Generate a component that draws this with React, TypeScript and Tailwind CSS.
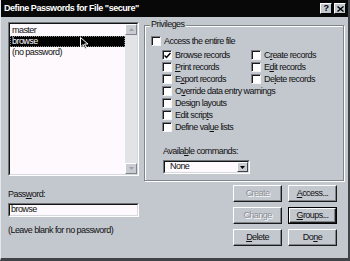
import React from "react";

const FONT = "font-['Liberation_Sans',Arial,sans-serif]";

function Check({ checked = false }: { checked?: boolean }) {
  return (
    <span className="w-[10px] h-[10px] shrink-0 bg-white border border-t-[#7c7f86] border-l-[#7c7f86] border-r-[#f4f4f6] border-b-[#f4f4f6] shadow-[inset_1px_1px_0_#1a1a1a] flex items-center justify-center">
      {checked && (
        <svg width="7" height="7" viewBox="0 0 7 7">
          <path d="M0.5 3.5 L2.5 5.5 L6.5 1" stroke="#000" strokeWidth="1.5" fill="none" />
        </svg>
      )}
    </span>
  );
}

function Option({ label, checked = false }: { label: React.ReactNode; checked?: boolean }) {
  return (
    <div className="flex items-center gap-[3px] h-[12px]">
      <Check checked={checked} />
      <span className="leading-none">{label}</span>
    </div>
  );
}

function Btn({
  children,
  disabled = false,
  focused = false,
}: {
  children: React.ReactNode;
  disabled?: boolean;
  focused?: boolean;
}) {
  return (
    <div
      className={`w-[49px] h-[17px] flex items-center justify-center ${
        focused ? "border border-black" : ""
      } bg-[#c3c7ce]`}
    >
      <div className="w-full h-full border border-t-white border-l-white border-r-[#1c1c1c] border-b-[#1c1c1c] flex items-center justify-center shadow-[inset_-1px_-1px_0_#80848b]">
        <span
          className={
            disabled
              ? "text-[#8a8e95] [text-shadow:1px_1px_0_#ffffff]"
              : "text-[#111]"
          }
        >
          {children}
        </span>
      </div>
    </div>
  );
}

export default function App() {
  return (
    <div
      className={`${FONT} w-[350px] h-[261px] bg-[#c3c7ce] text-[9px] tracking-[-0.55px] text-[#111] flex flex-col border-l border-l-[#e6e8ec] border-r-2 border-r-[#404348] border-b-[3px] border-b-[#404348] overflow-hidden`}
    >
      {/* title bar */}
      <div className="h-[17px] bg-[#080808] flex items-center justify-between pl-[3px] pr-[2px] shrink-0">
        <span className="text-white font-bold text-[9px] tracking-[-0.45px]">
          Define Passwords for File "secure"
        </span>
        <div className="flex gap-[2px]">
          <div className="w-[12px] h-[11px] bg-[#c3c7ce] border border-t-white border-l-white border-r-black border-b-black flex items-center justify-center font-bold text-[9px] leading-none text-black">
            ?
          </div>
          <div className="w-[12px] h-[11px] bg-[#c3c7ce] border border-t-white border-l-white border-r-black border-b-black flex items-center justify-center">
            <svg width="7" height="6" viewBox="0 0 7 6">
              <path d="M0.5 0.5 L6.5 5.5 M6.5 0.5 L0.5 5.5" stroke="#000" strokeWidth="1.4" />
            </svg>
          </div>
        </div>
      </div>

      <div className="flex flex-1 pl-[7px] pt-[5px] pr-[4px]">
        {/* left column */}
        <div className="w-[131px] flex flex-col">
          <div className="h-[154px] border border-t-[#6f737a] border-l-[#6f737a] border-r-white border-b-white">
            <div className="h-full border border-t-[#141414] border-l-[#141414] border-r-[#d6d9de] border-b-[#d6d9de] bg-[#fdf9fd] flex">
              <div className="flex-1 pt-[1px] leading-[11px]">
                <div className="pl-[2px] h-[11px]">master</div>
                <div className="relative h-[11px] bg-black text-white pl-[2px] outline-1 outline-dotted outline-[#888] -outline-offset-1">
                  browse
                  <svg className="absolute left-[70px] top-[1px]" width="10" height="14" viewBox="0 0 10 14">
                    <path d="M0.5 0.5 L0.5 10 L3 7.5 L5 12 L6.5 11.3 L4.6 7 L8 7 Z" fill="#000" stroke="#fff" strokeWidth="1" />
                  </svg>
                </div>
                <div className="pl-[2px] h-[11px]">(no password)</div>
              </div>
              <div className="w-[12px] bg-[#e2e3e6] flex flex-col justify-between">
                <div className="h-[11px] bg-[#c9ccd2] border border-t-white border-l-white border-r-[#808389] border-b-[#808389] flex items-center justify-center">
                  <svg width="5" height="3" viewBox="0 0 5 3">
                    <path d="M0 3 L2.5 0 L5 3 Z" fill="#9da1a8" />
                  </svg>
                </div>
                <div className="h-[11px] bg-[#c9ccd2] border border-t-white border-l-white border-r-[#808389] border-b-[#808389] flex items-center justify-center">
                  <svg width="5" height="3" viewBox="0 0 5 3">
                    <path d="M0 0 L2.5 3 L5 0 Z" fill="#9da1a8" />
                  </svg>
                </div>
              </div>
            </div>
          </div>

          <div className="mt-[14px] leading-none">
            Pass<span className="underline">w</span>ord:
          </div>
          <div className="mt-[4px] h-[14px] border border-t-[#6f737a] border-l-[#6f737a] border-r-white border-b-white">
            <div className="h-full border border-t-[#141414] border-l-[#141414] border-r-[#d6d9de] border-b-[#d6d9de] bg-[#fdf9fd] pl-[1px] flex items-center">
              browse
            </div>
          </div>
          <div className="mt-[9px] leading-none">(Leave blank for no password)</div>
        </div>

        {/* right column */}
        <div className="flex-1 ml-[5px] flex flex-col">
          <div className="relative mt-[3px] h-[156px] border border-[#80848b] shadow-[inset_1px_1px_0_#ffffff,1px_1px_0_#ffffff] pl-[6px] pt-[9px]">
            <span className="absolute left-[5px] -top-[6px] px-[1px] bg-[#c3c7ce] leading-none">
              Privileges
            </span>
            <Option label="Access the entire file" />
            <div className="mt-[2px] pl-[11px] flex">
              <div className="w-[89px] flex flex-col">
                <Option label="Browse records" checked />
                <Option label={<><span className="underline">P</span>rint records</>} />
                <Option label={<>E<span className="underline">x</span>port records</>} />
              </div>
              <div className="flex flex-col">
                <Option label={<>C<span className="underline">r</span>eate records</>} />
                <Option label={<>E<span className="underline">d</span>it records</>} />
                <Option label={<>De<span className="underline">l</span>ete records</>} />
              </div>
            </div>
            <div className="pl-[11px] flex flex-col">
              <Option label={<>O<span className="underline">v</span>erride data entry warnings</>} />
              <Option label={<>Desi<span className="underline">g</span>n layouts</>} />
              <Option label={<>Edit scrip<span className="underline">t</span>s</>} />
              <Option label={<>Define val<span className="underline">u</span>e lists</>} />
            </div>
            <div className="pl-[12px] mt-[14px] leading-none">
              Availa<span className="underline">b</span>le commands:
            </div>
            <div className="ml-[12px] mt-[4px] w-[87px] h-[14px] border border-t-[#6f737a] border-l-[#6f737a] border-r-white border-b-white">
              <div className="h-full border border-t-[#141414] border-l-[#141414] border-r-[#d6d9de] border-b-[#d6d9de] bg-[#fdf9fd] flex items-center">
                <span className="flex-1 pl-[5px]">None</span>
                <div className="w-[11px] h-full bg-[#c9ccd2] border border-t-white border-l-white border-r-[#404348] border-b-[#404348] flex items-center justify-center">
                  <svg width="5" height="3" viewBox="0 0 5 3">
                    <path d="M0 0 L2.5 3 L5 0 Z" fill="#000" />
                  </svg>
                </div>
              </div>
            </div>
          </div>

          <div className="mt-[4px] ml-[89px] grid grid-cols-[49px_49px] gap-x-[6px] gap-y-[5px]">
            <Btn disabled>Create</Btn>
            <Btn><span className="underline">A</span>ccess...</Btn>
            <Btn disabled>Change</Btn>
            <Btn focused><span className="underline">G</span>roups...</Btn>
            <Btn><span className="underline">D</span>elete</Btn>
            <Btn>Do<span className="underline">n</span>e</Btn>
          </div>
        </div>
      </div>
    </div>
  );
}
